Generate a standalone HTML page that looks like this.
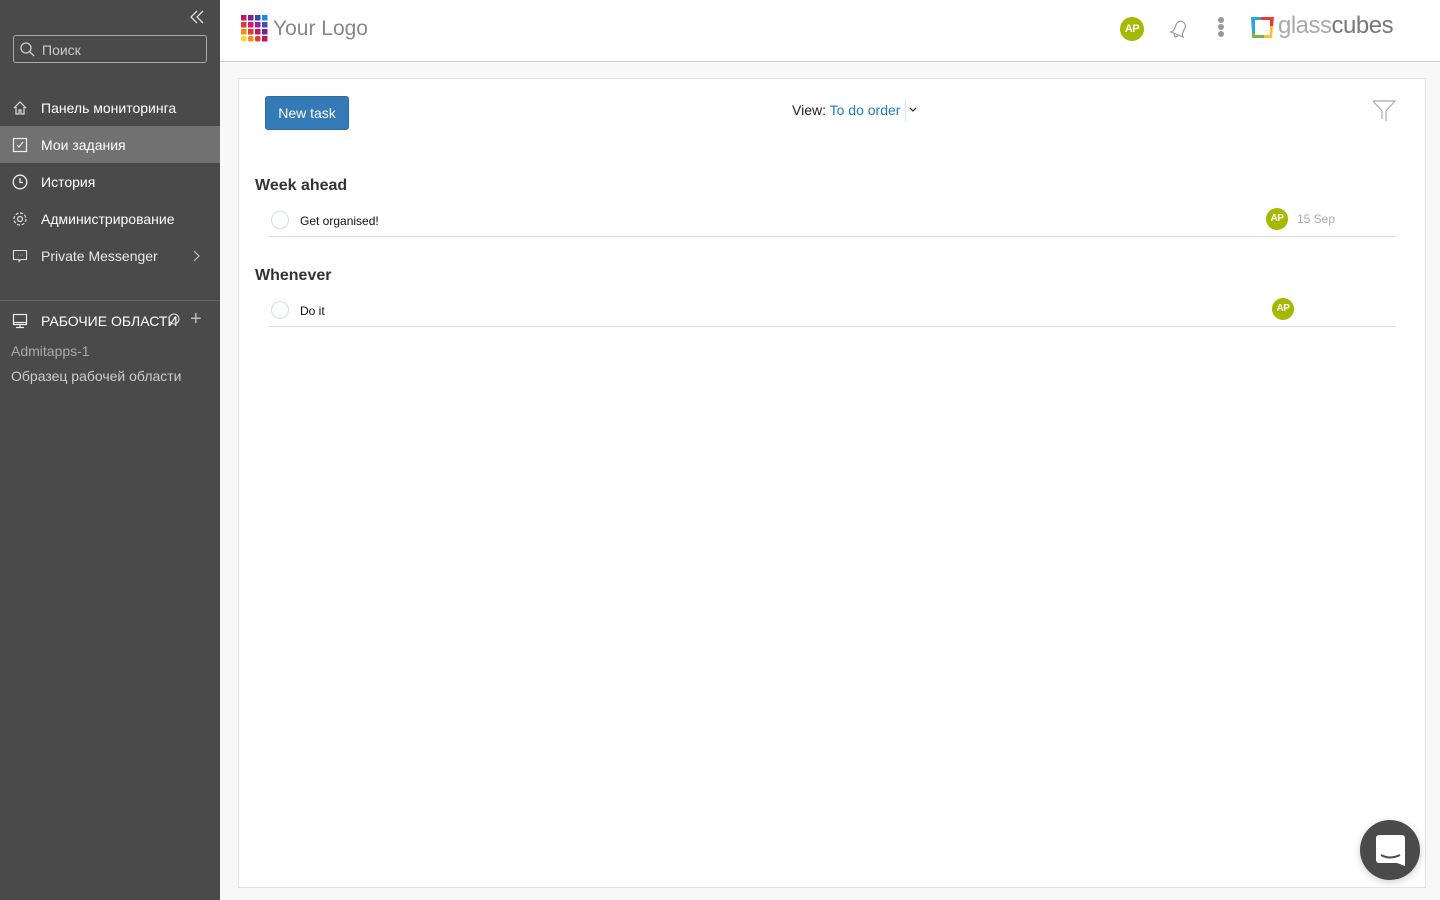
<!DOCTYPE html>
<html><head><meta charset="utf-8"><style>
*{box-sizing:border-box;margin:0;padding:0}
body{width:1440px;height:900px;overflow:hidden;font-family:"Liberation Sans","Noto Sans CJK SC",sans-serif;background:#f8f8f8;position:relative}
.sb{position:absolute;left:0;top:0;width:220px;height:900px;background:#4a4a4a;color:#fff}
.search{position:absolute;left:13px;top:35px;width:194px;height:28px;border:1px solid #aaa;border-radius:3px;color:#ccc;font-size:14px;padding:6px 0 0 28px}
.nav{position:absolute;left:0;width:220px;height:37px;font-size:14px;padding:11px 0 0 41px}
.nav svg{position:absolute;left:12px;top:11px}
.hdr{position:absolute;left:220px;top:0;width:1220px;height:62px;background:#fff;border-bottom:1px solid #d0d0d0}
.card{position:absolute;left:238px;top:78px;width:1188px;height:810px;background:#fff;border:1px solid #e2e2e2}
.av{position:absolute;width:22px;height:22px;border-radius:50%;background:#a6b800;color:#fff;font-size:10px;font-weight:bold;text-align:center;line-height:22px;letter-spacing:-0.5px}
.h{position:absolute;left:16px;font-size:16px;font-weight:bold;color:#333}
.row{position:absolute;left:30px;width:1127px;height:30px;border-bottom:1px solid #ddd;font-size:12px;color:#111}
.chk{position:absolute;left:2px;top:4px;width:18px;height:18px;border:1px solid #cfdfe0;border-radius:50%}
</style></head><body>
<div class="sb">
<svg style="position:absolute;left:189px;top:9px" width="16" height="16" viewBox="0 0 16 16" fill="none" stroke="#ddd" stroke-width="1.3"><path d="M8 2L2 8l6 6M14 2L8 8l6 6"/></svg>
<div class="search"><svg style="position:absolute;left:6px;top:6px" width="15" height="15" viewBox="0 0 15 15" fill="none" stroke="#ccc" stroke-width="1.3"><circle cx="6" cy="6" r="5"/><path d="M10 10l4 4"/></svg>Поиск</div>
<div class="nav" style="top:89px"><svg width="16" height="16" viewBox="0 0 16 16" fill="none" stroke="#ddd" stroke-width="1.2"><path d="M2 8L8 2l6 6M4 7v7h3v-4h2v4h3V7"/></svg>Панель мониторинга</div>
<div class="nav" style="top:126px;background:#717171"><svg width="16" height="16" viewBox="0 0 16 16" fill="none" stroke="#eee" stroke-width="1.2"><rect x="1.5" y="1.5" width="13" height="13"/><path d="M5 8l2 2 4-5"/></svg>Мои задания</div>
<div class="nav" style="top:163px"><svg width="16" height="16" viewBox="0 0 16 16" fill="none" stroke="#eee" stroke-width="1.3"><circle cx="8" cy="8" r="6.8"/><path d="M8 4v4.5h3"/></svg>История</div>
<div class="nav" style="top:200px"><svg width="16" height="16" viewBox="0 0 16 16" fill="none" stroke="#ddd" stroke-width="1.2"><circle cx="8" cy="8" r="2.5"/><circle cx="8" cy="8" r="6" stroke-dasharray="3 1.7"/></svg>Администрирование</div>
<div class="nav" style="top:237px;color:#e8e8e8"><svg width="16" height="16" viewBox="0 0 16 16" fill="none" stroke="#ddd" stroke-width="1.1"><path d="M1.5 2.5h13v9H9l-2 2v-2H1.5z"/><path d="M6 7h.5M8 7h.5M10 7h.5"/></svg>Private Messenger<svg style="left:192px;top:13px" width="8" height="12" viewBox="0 0 8 12" fill="none" stroke="#bbb" stroke-width="1.2"><path d="M2 1l5 5-5 5"/></svg></div>
<div style="position:absolute;left:0;top:300px;width:220px;border-top:1px solid #666"></div>
<svg style="position:absolute;left:12px;top:313px" width="16" height="16" viewBox="0 0 16 16" fill="none" stroke="#eee" stroke-width="1.2"><rect x="1.5" y="1.5" width="13" height="10"/><path d="M1.5 9.5h13M8 11.5v3M4 14.5h8"/></svg>
<div style="position:absolute;left:41px;top:313px;font-size:14px">РАБОЧИЕ ОБЛАСТИ</div>
<svg style="position:absolute;left:168px;top:313px" width="12" height="12" viewBox="0 0 12 12" fill="none" stroke="#ddd" stroke-width="1.1"><circle cx="6" cy="6" r="5"/></svg>
<div style="position:absolute;left:190px;top:308px;font-size:20px;color:#bbb;font-weight:300">+</div>
<div style="position:absolute;left:11px;top:343px;font-size:14px;color:#aaa">Admitapps-1</div>
<div style="position:absolute;left:11px;top:368px;font-size:14px;color:#ccc">Образец рабочей области</div>
</div>
<div class="hdr">
<svg style="position:absolute;left:21px;top:15px" width="27" height="27" viewBox="0 0 27 27">
<g><rect x="0" y="0" width="5.5" height="5.5" fill="#c2185b"/><rect x="7" y="0" width="5.5" height="5.5" fill="#7b1fa2"/><rect x="14" y="0" width="5.5" height="5.5" fill="#3949ab"/><rect x="21" y="0" width="5.5" height="5.5" fill="#1e88e5"/>
<rect x="0" y="7" width="5.5" height="5.5" fill="#e53935"/><rect x="7" y="7" width="5.5" height="5.5" fill="#d81b60"/><rect x="14" y="7" width="5.5" height="5.5" fill="#8e24aa"/><rect x="21" y="7" width="5.5" height="5.5" fill="#3f51b5"/>
<rect x="0" y="14" width="5.5" height="5.5" fill="#fb8c00"/><rect x="7" y="14" width="5.5" height="5.5" fill="#e53935"/><rect x="14" y="14" width="5.5" height="5.5" fill="#c2185b"/><rect x="21" y="14" width="5.5" height="5.5" fill="#7b1fa2"/>
<rect x="0" y="21" width="5.5" height="5.5" fill="#fdd835" rx="2"/><rect x="7" y="21" width="5.5" height="5.5" fill="#fb8c00" rx="2"/><rect x="14" y="21" width="5.5" height="5.5" fill="#e53935" rx="2"/><rect x="21" y="21" width="5.5" height="5.5" fill="#c2185b"/></g></svg>
<div style="position:absolute;left:53px;top:17px;font-size:21px;color:#888">Your Logo</div>
<div class="av" style="left:900px;top:17px;width:24px;height:24px;line-height:24px;font-size:11px">AP</div>
<svg style="position:absolute;left:948px;top:18px" width="22" height="22" viewBox="0 0 22 22" fill="none" stroke="#999" stroke-width="1.2"><path d="M3 14c3-1 4-4 5-7s4-5 7-3 3 5 1 8-2 5-1 7zM6 16l1 3 3-1"/></svg>
<svg style="position:absolute;left:997px;top:16px" width="8" height="24" viewBox="0 0 8 24" fill="#999"><circle cx="4" cy="4" r="3"/><circle cx="4" cy="11" r="3"/><circle cx="4" cy="18" r="3"/></svg>
<svg style="position:absolute;left:1031px;top:16px" width="23" height="23" viewBox="0 0 23 23"><path d="M0 0h23L22 23H0z" fill="#fff"/><path d="M0 1h10v3H4v13H1z" fill="#29a8e0"/><path d="M10 1h13l-1 9h-3V4h-9z" fill="#e53935"/><path d="M19 10h3l-1 12h-8v-3h6z" fill="#fbc02d"/><path d="M1 17h3v2h9v3H1z" fill="#7cb342"/></svg>
<div style="position:absolute;left:1058px;top:12px;font-size:24px;letter-spacing:-0.5px"><span style="color:#aaa">glass</span><span style="color:#777">cubes</span></div>
</div>
<div class="card">
<div style="position:absolute;left:26px;top:17px;width:84px;height:34px;background:#337ab7;border:1px solid #2e6da4;border-radius:3px;color:#fff;font-size:14px;text-align:center;line-height:32px">New task</div>
<div style="position:absolute;left:553px;top:23px;font-size:14px;color:#222">View: <span style="color:#1a7bc0">To do order</span></div>
<div style="position:absolute;left:666px;top:20px;height:22px;border-left:1px solid #e5e5e5"></div>
<svg style="position:absolute;left:669px;top:27px" width="10" height="8" viewBox="0 0 10 8" fill="none" stroke="#333" stroke-width="1.3"><path d="M2 2l3 3 3-3"/></svg>
<svg style="position:absolute;left:1133px;top:20px" width="24" height="24" viewBox="0 0 24 24" fill="none" stroke="#aaa" stroke-width="1.2"><path d="M1 2h22l-9 10v10M10 12v8"/><path d="M1 2l9 10"/></svg>
<div class="h" style="top:98px">Week ahead</div>
<div class="row" style="top:128px"><div class="chk"></div><div style="position:absolute;left:31px;top:7px">Get organised!</div><div class="av" style="left:997px;top:1px">AP</div><div style="position:absolute;left:1028px;top:5px;color:#aaa">15 Sep</div></div>
<div class="h" style="top:188px">Whenever</div>
<div class="row" style="top:218px"><div class="chk"></div><div style="position:absolute;left:31px;top:7px">Do it</div><div class="av" style="left:1003px;top:1px">AP</div></div>
</div>
<div style="position:absolute;left:1360px;top:820px;width:60px;height:60px;border-radius:50%;background:#4a4a4a;box-shadow:0 2px 8px rgba(0,0,0,.2)">
<svg style="position:absolute;left:16px;top:15px" width="29" height="31" viewBox="0 0 29 31"><path d="M3 0h23a3 3 0 0 1 3 3v28l-8-3H3a3 3 0 0 1-3-3V3a3 3 0 0 1 3-3z" fill="#fff"/><path d="M5 20q9 5 19 0" fill="none" stroke="#4a4a4a" stroke-width="2"/></svg></div>
</body></html>
